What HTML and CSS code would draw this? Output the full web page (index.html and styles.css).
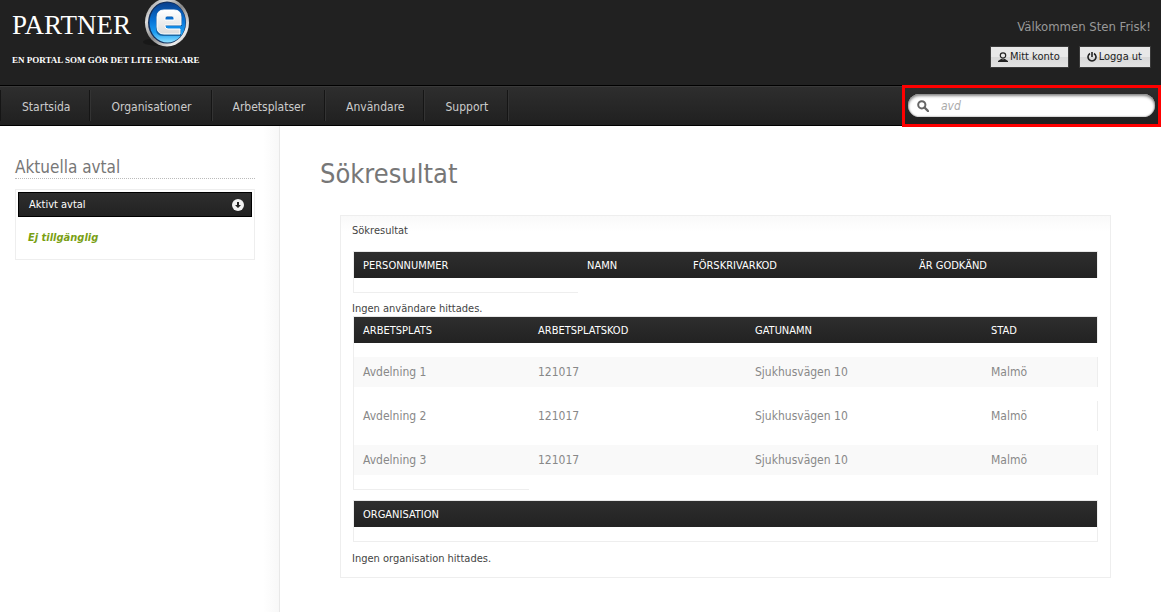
FILE: index.html
```html
<!DOCTYPE html>
<html lang="sv">
<head>
<meta charset="utf-8">
<title>Partner e – Sökresultat</title>
<link rel="stylesheet" href="styles.css">
</head>
<body>
<header class="top">
  <div class="brand">
    <div class="brand-row">
      <span class="brand-name">PARTNER</span>
      <svg class="brand-mark" viewBox="0 0 50 50" aria-hidden="true">
        <defs>
          <linearGradient id="rim" x1="0" y1="0" x2="1" y2="1">
            <stop offset="0" stop-color="#777"/><stop offset=".25" stop-color="#ddd"/>
            <stop offset=".5" stop-color="#888"/><stop offset=".8" stop-color="#eee"/><stop offset="1" stop-color="#999"/>
          </linearGradient>
          <linearGradient id="blue" x1="0" y1="0" x2="0" y2="1">
            <stop offset="0" stop-color="#0a3f8c"/><stop offset=".45" stop-color="#0873d6"/>
            <stop offset=".75" stop-color="#1b9df2"/><stop offset="1" stop-color="#8fe0ff"/>
          </linearGradient>
          <linearGradient id="face" x1="0" y1="0" x2="0" y2="1">
            <stop offset="0" stop-color="#fff"/><stop offset="1" stop-color="#dcdcdc"/>
          </linearGradient>
        </defs>
        <ellipse cx="20" cy="42" rx="18" ry="4" fill="#181818"/>
        <ellipse cx="26" cy="22.500" rx="22" ry="24" fill="url(#rim)"/>
        <ellipse cx="26" cy="22.500" rx="19" ry="21" fill="#14305c"/>
        <ellipse cx="26.500" cy="22.500" rx="18" ry="20" fill="url(#blue)"/>
        <path d="M41 25H24v1q0 3 3 3h13v6H22q-7 0-7-7V17q0-7 7-7h12q7 0 7 7zM24 20h10v-2q0-2-2-2h-6q-2 0-2 2z" fill="#07386f" opacity=".6" fill-rule="evenodd" transform="translate(0 1)"/>
        <path d="M40 25H24v1q0 3 3 3h12v5H23q-7 0-7-7V17q0-7 7-7h10q7 0 7 7zM24 20h9v-2q0-2-2-2h-5q-2 0-2 2z" fill="url(#face)" stroke="#fff" stroke-width="1" fill-rule="evenodd"/>
      </svg>
    </div>
    <p class="tagline">EN PORTAL SOM GÖR DET LITE ENKLARE</p>
  </div>
  <div class="account">
    <p class="welcome">Välkommen Sten Frisk!</p>
    <div class="account-actions">
      <button class="btn" type="button">
        <svg class="btn-icon" viewBox="0 0 10 10" aria-hidden="true"><circle cx="5" cy="3.500" r="2.700" fill="none" stroke="#222" stroke-width="1.200"/><path d="M0 10V9l3-2h1l1 .6L6 7h1l3 2v1z" fill="#222"/></svg>Mitt konto</button>
      <button class="btn" type="button">
        <svg class="btn-icon" viewBox="0 0 10 10" aria-hidden="true"><path d="M3 1.500a4 4 0 1 0 4 0M5 0v5" fill="none" stroke="#222" stroke-width="1.600"/></svg>Logga ut</button>
    </div>
  </div>
</header>
<nav class="nav" aria-label="Huvudmeny">
  <ul class="menu">
    <li class="menu-item"><a class="menu-link" href="#">Startsida</a></li>
    <li class="menu-item"><a class="menu-link" href="#">Organisationer</a></li>
    <li class="menu-item"><a class="menu-link" href="#">Arbetsplatser</a></li>
    <li class="menu-item"><a class="menu-link" href="#">Användare</a></li>
    <li class="menu-item"><a class="menu-link" href="#">Support</a></li>
  </ul>
  <form class="search" role="search">
    <label class="search-field">
      <svg class="search-icon" viewBox="0 0 12 12" aria-label="Sök"><circle cx="4.800" cy="4.800" r="3.600" fill="none" stroke="#666" stroke-width="2"/><path d="M7.500 7.500 11 11" stroke="#666" stroke-width="2.400" stroke-linecap="round"/></svg>
      <input class="search-input" type="text" value="avd" aria-label="Sök">
    </label>
  </form>
</nav>
<div class="page">
  <aside class="side">
    <h2 class="side-title">Aktuella avtal</h2>
    <section class="box">
      <h3 class="box-head">Aktivt avtal
        <svg class="box-icon" viewBox="0 0 12 12" aria-hidden="true"><circle cx="6" cy="6" r="6" fill="#f2f2f2"/><path d="M5 3h2v3h2L6 9 3 6h2z" fill="#222"/></svg>
      </h3>
      <p class="box-text">Ej tillgänglig</p>
    </section>
  </aside>
  <main class="main">
    <h1 class="title">Sökresultat</h1>
    <section class="panel">
      <p class="note">Sökresultat</p>
      <table class="grid users">
        <colgroup><col class="u1"><col class="u2"><col class="u3"><col></colgroup>
        <thead><tr><th>PERSONNUMMER</th><th>NAMN</th><th>FÖRSKRIVARKOD</th><th>ÄR GODKÄND</th></tr></thead>
        <tbody><tr class="gap end"><td></td></tr></tbody>
      </table>
      <p class="note note-users">Ingen användare hittades.</p>
      <table class="grid places">
        <colgroup><col class="p1"><col class="p2"><col class="p3"><col></colgroup>
        <thead><tr><th>ARBETSPLATS</th><th>ARBETSPLATSKOD</th><th>GATUNAMN</th><th>STAD</th></tr></thead>
        <tbody>
          <tr class="gap"><td></td></tr>
          <tr class="row shade"><td>Avdelning 1</td><td>121017</td><td>Sjukhusvägen 10</td><td>Malmö</td></tr>
          <tr class="gap"><td></td></tr>
          <tr class="row"><td>Avdelning 2</td><td>121017</td><td>Sjukhusvägen 10</td><td>Malmö</td></tr>
          <tr class="gap"><td></td></tr>
          <tr class="row shade"><td>Avdelning 3</td><td>121017</td><td>Sjukhusvägen 10</td><td>Malmö</td></tr>
          <tr class="gap end"><td></td></tr>
        </tbody>
      </table>
      <table class="grid orgs">
        <thead><tr><th>ORGANISATION</th></tr></thead>
        <tbody><tr class="gap end"><td></td></tr></tbody>
      </table>
      <p class="note">Ingen organisation hittades.</p>
    </section>
  </main>
</div>
</body>
</html>
```
FILE: styles.css
```css
* { box-sizing: border-box; }

body {
  margin: 0;
  min-height: 100vh;
  display: flex;
  flex-direction: column;
  background: #fff;
  color: #444;
  font: 11px/16px Tahoma, "DejaVu Sans Condensed", "DejaVu Sans", sans-serif;
}

h1, h2, h3, p, ul { margin: 0; padding: 0; font-weight: normal; }

/* Header */
.top {
  display: flex;
  justify-content: space-between;
  min-height: 85px;
  padding: 0 10px 0 12px;
  background: #212121;
}
.brand-row { display: flex; align-items: center; gap: 10px; height: 50px; }
.brand-name { font: 27px/32px "Liberation Serif", serif; color: #fff; }
.brand-mark { width: 50px; height: 50px; }
.tagline { font: bold 9px/20px "Liberation Serif", serif; color: #fff; white-space: nowrap; }
.account { display: flex; flex-direction: column; align-items: flex-end; padding-top: 18px; gap: 10px; }
.welcome { font-size: 13px; line-height: 18px; color: #999; }
.account-actions { display: flex; gap: 10px; }
.btn {
  display: flex;
  align-items: center;
  gap: 2px;
  height: 22px;
  padding: 0 8px 0 7px;
  border: 1px solid #3a3a3a;
  background: linear-gradient(#e8e8e8 50%, #d8d8d8 50%, #e2e2e2);
  color: #222;
  font: inherit;
}
.btn-icon { width: 10px; height: 10px; }

/* Navigation */
.nav {
  display: flex;
  justify-content: space-between;
  height: 41px;
  border-top: 1px solid #000;
  border-bottom: 1px solid #000;
  background: linear-gradient(#2e2e2e, #202020);
  box-shadow: inset 0 1px #3a3a3a;
}
.menu { display: flex; list-style: none; border-left: 1px solid #151515; margin: 4px 0; }
.menu-item { border-right: 1px solid #151515; box-shadow: 1px 0 #333; }
.menu-link {
  display: block;
  padding: 2px 19px 0 21px;
  font-size: 12px;
  line-height: 30px;
  color: #ccc;
  text-decoration: none;
}
.search {
  z-index: 1;
  width: 259px;
  height: 42px;
  margin-top: -1px;
  padding: 6px 3px;
  border: 3px solid #f00;
}
.search-field {
  display: flex;
  align-items: center;
  gap: 12px;
  height: 23px;
  padding: 0 9px;
  border-radius: 12px;
  background: #fff;
  box-shadow: inset 0 2px 3px #888, inset 0 0 2px #777;
}
.search-icon { flex: none; width: 12px; height: 12px; }
.search-input {
  flex: 1;
  min-width: 0;
  padding: 0;
  border: 0;
  outline: 0;
  background: none;
  color: #aaa;
  font: italic 12px/16px Tahoma, "DejaVu Sans Condensed", sans-serif;
}

/* Page columns */
.page { flex: 1; display: flex; }
.side {
  width: 280px;
  padding: 31px 24px 0 15px;
  border-right: 1px solid #e8e8e8;
  background: linear-gradient(to right, #fff 263px, #f8f8f8);
}
.side-title {
  border-bottom: 1px dotted #bbb;
  color: #777;
  font-size: 17px;
  line-height: 21px;
}
.box { margin-top: 10px; padding: 2px; border: 1px solid #eee; height: 71px; background: #fff; }
.box-head {
  display: flex;
  align-items: center;
  justify-content: space-between;
  height: 25px;
  padding: 1px 7px 0 10px;
  border: 1px solid #000;
  background: linear-gradient(#2e2e2e, #222);
  color: #fff;
  font-size: 11px;
}
.box-icon { width: 12px; height: 12px; }
.box-text { padding: 13px 10px; color: #7a9f14; font-weight: bold; font-style: italic; }

.main { flex: 1; min-width: 0; padding: 30px 50px 34px 40px; }
.title { color: #777; font-size: 27px; line-height: 36px; }
.panel {
  margin: 23px 0 0 20px;
  padding: 7px 12px 10px;
  border: 1px solid #eee;
  background: linear-gradient(#f9f9f9, #fff 16px);
}
.note { line-height: 16px; margin-left: -1px; }
.note-users { margin-top: 9px; line-height: 14px; }

/* Result tables */
.grid { width: 100%; table-layout: fixed; border-collapse: separate; border-spacing: 0; }
.users { margin-top: 12px; }
.orgs { margin: 10px 0 9px; }
.u1 { width: 225px; }
.u2 { width: 106px; }
.u3 { width: 226px; }
.p1 { width: 176px; }
.p2 { width: 217px; }
.p3 { width: 236px; }
.grid th {
  height: 27px;
  padding: 1px 9px 0;
  border-top: 1px solid #e8e8e8;
  background: linear-gradient(#2e2e2e, #222) padding-box;
  color: #fff;
  font-size: 11px;
  font-weight: normal;
  text-align: left;
}
.grid th:first-child, .grid td:first-child { border-left: 1px solid #eee; }
.grid th:last-child, .row td:last-child, .orgs td { border-right: 1px solid #eee; }
.gap td { height: 14px; padding: 0; }
.end td { height: 15px; border-bottom: 1px solid #eee; }
.row td { height: 30px; padding: 0 9px; color: #888; font-size: 12px; }
.shade td { background: #f9f9f9; }
```
